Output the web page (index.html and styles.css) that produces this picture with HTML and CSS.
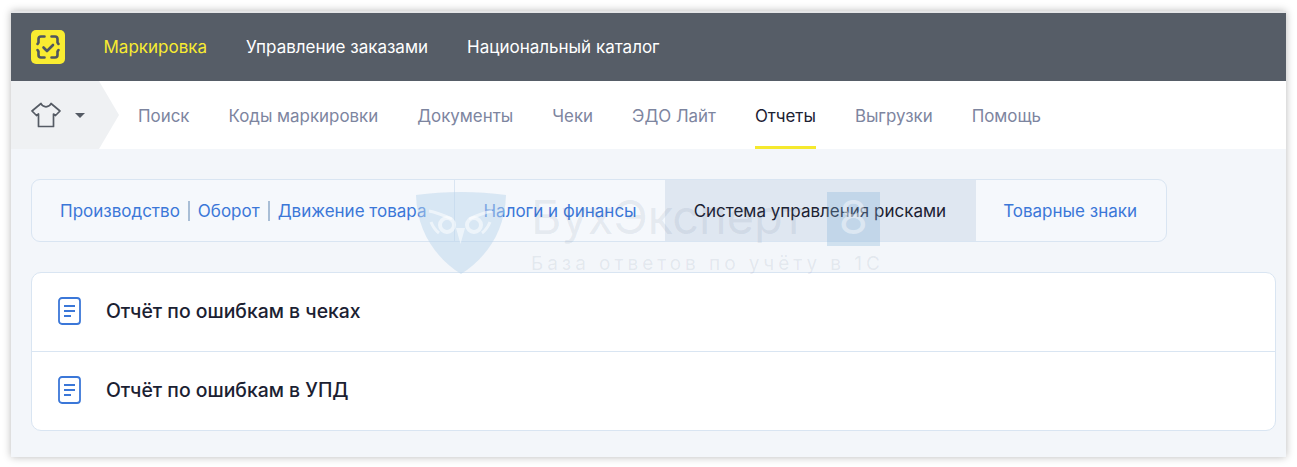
FILE: index.html
```html
<!DOCTYPE html>
<html lang="ru">
<head>
<meta charset="utf-8">
<title>Отчеты</title>
<link rel="stylesheet" href="styles.css">
</head>
<body>
<div class="window">
  <header class="topbar">
    <svg class="logo" width="34" height="34" viewBox="0 0 34 34">
      <rect width="34" height="34" rx="5" fill="#f9ec31"/>
      <g fill="none" stroke="#4f5660" stroke-width="2.600" stroke-linecap="round" stroke-linejoin="round">
        <path d="M13.500 6.500H10a2.500 2.500 0 0 0-2.500 2.500v3.500l-1 1.500"/>
        <path d="M20.500 6.500H24a2.500 2.500 0 0 1 2.500 2.500v3.500l1 1.500"/>
        <path d="M6.500 20l1 1.500V25a2.500 2.500 0 0 0 2.500 2.500h3.500"/>
        <path d="M27.500 20l-1 1.500V25a2.500 2.500 0 0 1-2.500 2.500h-3.500"/>
        <path d="M12.500 17.500l3.500 3.500 6-6"/>
      </g>
    </svg>
    <nav class="topnav">
      <a class="toplink active">Маркировка</a>
      <a class="toplink">Управление заказами</a>
      <a class="toplink">Национальный каталог</a>
    </nav>
  </header>
  <div class="subbar">
    <div class="category">
      <svg class="shirt" width="30" height="26" viewBox="0 0 30 26">
        <path d="M10 1.500L1 9l4.500 4.500L7.500 12V24.500h15V12l2 1.500L29 9 20 1.500c-1 2.300-3 3.300-5 3.300S11 3.800 10 1.500z" fill="none" stroke="#555b64" stroke-width="1.700" stroke-linejoin="round"/>
      </svg>
      <span class="caret"></span>
    </div>
    <nav class="subnav">
      <a class="sublink">Поиск</a>
      <a class="sublink">Коды маркировки</a>
      <a class="sublink">Документы</a>
      <a class="sublink">Чеки</a>
      <a class="sublink">ЭДО Лайт</a>
      <a class="sublink current">Отчеты</a>
      <a class="sublink">Выгрузки</a>
      <a class="sublink">Помощь</a>
    </nav>
  </div>
  <main class="content">
    <div class="tabs">
      <div class="tab group">
        <a class="tablink">Производство</a>
        <a class="tablink">Оборот</a>
        <a class="tablink">Движение товара</a>
      </div>
      <div class="tab"><a class="tablink">Налоги и финансы</a></div>
      <div class="tab selected"><a class="tablink">Система управления рисками</a></div>
      <div class="tab"><a class="tablink">Товарные знаки</a></div>
    </div>
    <div class="reports">
      <div class="report">
        <svg class="doc" width="23" height="28" viewBox="0 0 23 28">
          <rect x="1" y="1" width="21" height="26" rx="3" fill="none" stroke="#3b77d8" stroke-width="1.800"/>
          <path d="M6 9h11M6 14h11M6 19h7" fill="none" stroke="#3b77d8" stroke-width="1.800"/>
        </svg>
        <span class="report-name">Отчёт по ошибкам в чеках</span>
      </div>
      <div class="report">
        <svg class="doc" width="23" height="28" viewBox="0 0 23 28">
          <rect x="1" y="1" width="21" height="26" rx="3" fill="none" stroke="#3b77d8" stroke-width="1.800"/>
          <path d="M6 9h11M6 14h11M6 19h7" fill="none" stroke="#3b77d8" stroke-width="1.800"/>
        </svg>
        <span class="report-name">Отчёт по ошибкам в УПД</span>
      </div>
    </div>
    <div class="watermark">
      <svg class="owl" width="90" height="82" viewBox="0 0 90 82">
        <path d="M0 3C30 -1 60 -1 90 3C89 40 70 66 45 82C20 66 1 40 0 3z" fill="#bcd6ec" fill-opacity=".5"/>
        <g fill="none" stroke="#fff" stroke-opacity=".55">
          <circle cx="31" cy="33" r="7" stroke-width="4"/>
          <circle cx="58" cy="33" r="7" stroke-width="4"/>
          <path d="M13 19c6 1 14 4 23 8M76 19c-6 1-14 4-23 8" stroke-width="3"/>
          <path d="M15 30c2 5 4 8 8 11M74 30c-2 5-4 8-8 11" stroke-width="3"/>
        </g>
        <path d="M40 36h9l-4.500 16z" fill="#fff" fill-opacity=".55"/>
      </svg>
      <div class="mark-text">
        <div class="mark-title"><span>БухЭксперт</span><span class="mark-eight">8</span></div>
        <div class="mark-sub">База ответов по учёту в 1С</div>
      </div>
    </div>
  </main>
</div>
</body>
</html>
```
FILE: styles.css
```css
* { box-sizing: border-box; }
html, body { margin: 0; padding: 0; background: #fff; }
body { font-family: Inter, "Liberation Sans", sans-serif; height: 467px; overflow: hidden; padding: 11px 11px 10px; }
a { text-decoration: none; }
.window {
  width: 1275px;
  height: 446px;
  background: #f3f6fa;
  border-top: 2px solid #e4e5e7;
  box-shadow: 0 0 8px rgba(0,0,0,.28);
  display: flex;
  flex-direction: column;
}
.topbar {
  height: 68px;
  flex: none;
  background: #565d67;
  display: flex;
  align-items: center;
  padding-left: 20px;
}
.logo { flex: none; margin-right: 38.500px; }
.topnav { display: flex; gap: 39px; }
.toplink { font-size: 17px; color: #fff; }
.toplink.active { color: #f9ec31; }
.subbar {
  height: 68px;
  flex: none;
  background: #fff;
  display: flex;
}
.category {
  width: 108px;
  flex: none;
  background: #eff1f3;
  clip-path: polygon(0 0, 88px 0, 108px 50%, 88px 100%, 0 100%);
  display: flex;
  align-items: center;
  padding-left: 20px;
}
.caret {
  margin-left: 14px;
  border-left: 5px solid transparent;
  border-right: 5px solid transparent;
  border-top: 5px solid #555b64;
}
.subnav { display: flex; gap: 39px; padding-left: 19px; }
.sublink {
  font-size: 16.900px;
  color: #7d859f;
  line-height: 71px;
  height: 68px;
}
.sublink.current { color: #1b2132; border-bottom: 3px solid #f5e92e; }
.content { position: relative; flex: 1; padding: 30px 10px 26px 20px; }
.tabs {
  width: 1136px;
  height: 63px;
  display: flex;
  background: #f5f8fc;
  border: 1px solid #d9e5f2;
  border-radius: 9px;
  overflow: hidden;
}
.tab { display: flex; align-items: center; padding: 0 28px; font-size: 17px; }
.tab.group { border-right: 1px solid #d9e5f2; }
.tablink { color: #3b77d8; white-space: nowrap; line-height: 20px; }
.group .tablink { padding: 0 8px; border-left: 2px solid #a9bed6; }
.group .tablink:first-child { border-left: 0; padding-left: 0; }
.group .tablink:last-child { padding-right: 0; }
.tab.selected { background: #dfe7f1; padding: 0 30px 0 29px; }
.tab.selected + .tab { padding-left: 27px; }
.selected .tablink { color: #1b2132; }
.reports {
  margin-top: 30px;
  width: 1245px;
  background: #fff;
  border: 1px solid #d9e5f2;
  border-radius: 10px;
}
.report {
  height: 78px;
  display: flex;
  align-items: center;
  padding: 0 0 2px 26px;
}
.report + .report { height: 79px; border-top: 1px solid #d9e5f2; }
.doc { flex: none; margin-right: 25px; }
.report-name { font-size: 19.400px; font-weight: 500; color: #1b2132; }
.watermark {
  position: absolute;
  left: 405px;
  top: 43px;
  display: flex;
  pointer-events: none;
}
.owl { margin-right: 25px; }
.mark-title { font-size: 47px; line-height: 50px; color: rgba(80,100,130,.1); display: flex; gap: 22px; }
.mark-eight { background: rgba(130,175,215,.3); color: rgba(255,255,255,.45); width: 53px; height: 54px; text-align: center; }
.mark-sub { font-size: 19px; letter-spacing: 3.950px; color: rgba(80,100,130,.1); margin-top: 6px; }
```
